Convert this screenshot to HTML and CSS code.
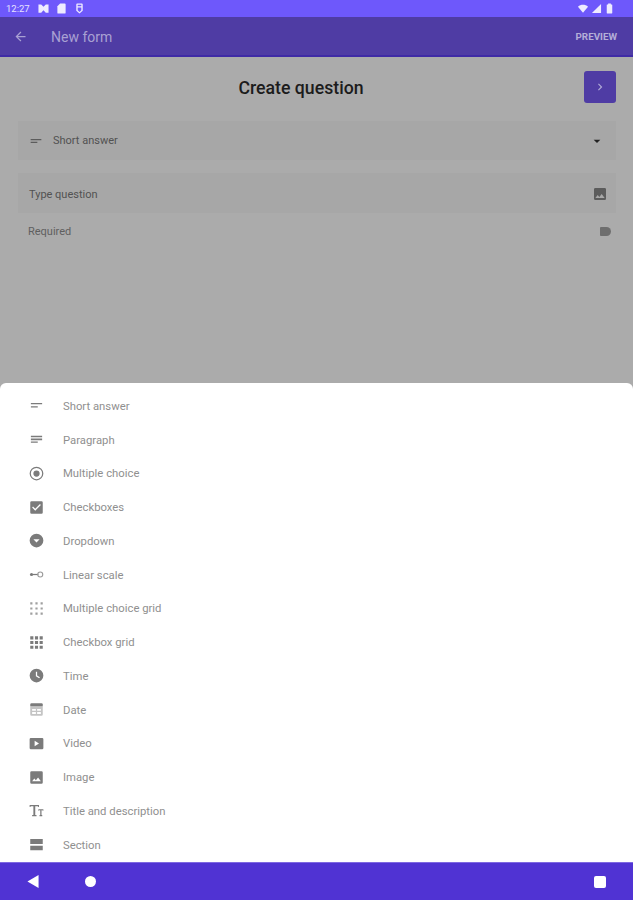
FILE: index.html
```html
<!DOCTYPE html>
<html lang="en">

<head>
    <meta charset="UTF-8">
    <meta name="viewport" content="width=device-width, initial-scale=1">
    <title>Create question</title>
    <link rel="stylesheet" href="styles.css">
</head>

<body>

    <div class="status-bar">
        <div class="status-left">
            <span class="clock">12:27</span>
            <svg class="status-icon" viewBox="0 0 24 24"><path d="M1 3h6l5 5 5-5h6v18h-6l-5-5-5 5H1z" /></svg>
            <svg class="status-icon" viewBox="0 0 24 24"><path d="M9 1h10a2 2 0 0 1 2 2v18a2 2 0 0 1-2 2H5a2 2 0 0 1-2-2V7z" /></svg>
            <svg class="status-icon" viewBox="0 0 24 24"><path fill-rule="evenodd" d="M7 1h10a2 2 0 0 1 2 2v14l-7 6-7-6V3a2 2 0 0 1 2-2zm1 3v3h8V4zm0 6v6l4 3.500 4-3.500v-6z" /></svg>
        </div>
        <div class="status-right">
            <svg class="status-icon wide" viewBox="0 0 24 24"><path d="M12 21L1 8c6-5.500 16-5.500 22 0z" /></svg>
            <svg class="status-icon" viewBox="0 0 24 24"><path d="M22 2v20H2z" /></svg>
            <svg class="status-icon" viewBox="0 0 24 24"><path d="M9 1h6v2h2a1 1 0 0 1 1 1v18a1 1 0 0 1-1 1H7a1 1 0 0 1-1-1V4a1 1 0 0 1 1-1h2z" /></svg>
        </div>
    </div>

    <div class="app-bar">
        <svg class="back-arrow" viewBox="0 0 24 24"><path d="M20 11H7.830l5.590-5.590L12 4l-8 8 8 8 1.410-1.410L7.830 13H20z" /></svg>
        <span class="app-title">New form</span>
        <span class="preview">PREVIEW</span>
    </div>

    <div class="main">
        <div class="question-head">
            <h2>Create question</h2>
            <button class="next-btn">
                <svg viewBox="0 0 24 24"><path d="M10 6L8.590 7.410 13.170 12l-4.580 4.590L10 18l6-6z" /></svg>
            </button>
        </div>

        <div class="field type-field">
            <svg class="field-icon" viewBox="0 0 24 24"><path d="M4 9h16v2H4zM4 13h10v2H4z" /></svg>
            <span class="grow">Short answer</span>
            <svg class="drop-icon" viewBox="0 0 24 24"><path d="M7 10l5 5 5-5z" /></svg>
        </div>

        <div class="field text-field">
            <span class="grow">Type question</span>
            <svg class="field-icon" viewBox="0 0 24 24"><path d="M21 19V5a2 2 0 0 0-2-2H5a2 2 0 0 0-2 2v14a2 2 0 0 0 2 2h14a2 2 0 0 0 2-2zM8.500 13.500l2.500 3 3.500-4.500 4.500 6H5z" /></svg>
        </div>

        <div class="required-row">
            <span class="grow">Required</span>
            <span class="toggle"></span>
        </div>
    </div>

    <div class="sheet">
        <div class="sheet-item">
            <svg viewBox="0 0 24 24"><path d="M3 8h18v2H3zM3 13h11v2H3z" /></svg>
            <span>Short answer</span>
        </div>
        <div class="sheet-item">
            <svg viewBox="0 0 24 24"><path d="M3 6h18v2.500H3zM3 10.500h18V13H3zM3 15h11v2H3z" /></svg>
            <span>Paragraph</span>
        </div>
        <div class="sheet-item">
            <svg viewBox="0 0 24 24"><path d="M12 7a5 5 0 1 0 0 10 5 5 0 0 0 0-10zm0-6a11 11 0 1 0 0 22 11 11 0 0 0 0-22zm0 20a9 9 0 1 1 0-18 9 9 0 0 1 0 18z" /></svg>
            <span>Multiple choice</span>
        </div>
        <div class="sheet-item">
            <svg viewBox="0 0 24 24"><path d="M20 2H4a2 2 0 0 0-2 2v16a2 2 0 0 0 2 2h16a2 2 0 0 0 2-2V4a2 2 0 0 0-2-2zm-10 15l-5-5 1.410-1.410L10 14.170l7.590-7.590L19 8z" /></svg>
            <span>Checkboxes</span>
        </div>
        <div class="sheet-item">
            <svg viewBox="0 0 24 24"><path d="M12 1a11 11 0 1 0 0 22 11 11 0 0 0 0-22zm0 14l-5-5h10z" /></svg>
            <span>Dropdown</span>
        </div>
        <div class="sheet-item">
            <svg viewBox="0 0 24 24"><circle cx="4" cy="12" r="2.500" /><path d="M4 11h11v2H4z" /><circle cx="18" cy="12" r="4" fill="none" stroke="#9a9a9a" stroke-width="1.800" /></svg>
            <span>Linear scale</span>
        </div>
        <div class="sheet-item">
            <svg class="light" viewBox="0 0 24 24"><path d="M2 2h3.500v3.500H2zM10.250 2h3.500v3.500h-3.500zM18.500 2H22v3.500h-3.500zM2 10.250h3.500v3.500H2zM10.250 10.250h3.500v3.500h-3.500zM18.500 10.250H22v3.500h-3.500zM2 18.500h3.500V22H2zM10.250 18.500h3.500V22h-3.500zM18.500 18.500H22V22h-3.500z" /></svg>
            <span>Multiple choice grid</span>
        </div>
        <div class="sheet-item">
            <svg viewBox="0 0 24 24"><path d="M2 2h5v5H2zM9.500 2h5v5h-5zM17 2h5v5h-5zM2 9.500h5v5H2zM9.500 9.500h5v5h-5zM17 9.500h5v5h-5zM2 17h5v5H2zM9.500 17h5v5h-5zM17 17h5v5h-5z" /></svg>
            <span>Checkbox grid</span>
        </div>
        <div class="sheet-item">
            <svg viewBox="0 0 24 24"><path d="M12 1a11 11 0 1 0 0 22 11 11 0 0 0 0-22zm4.200 15.200L11 13V6h2v6l4.500 2.700z" /></svg>
            <span>Time</span>
        </div>
        <div class="sheet-item">
            <svg viewBox="0 0 24 24"><path d="M20 2H4a2 2 0 0 0-2 2v3h20V4a2 2 0 0 0-2-2z" /><path class="tint" d="M2 8h20v12a2 2 0 0 1-2 2H4a2 2 0 0 1-2-2zm3 3v3h6v-3zm8 0v3h6v-3zm-8 5v3h6v-3zm8 0v3h6v-3z" fill-rule="evenodd" /></svg>
            <span>Date</span>
        </div>
        <div class="sheet-item">
            <svg viewBox="0 0 24 24"><path d="M3 3h18a2 2 0 0 1 2 2v14a2 2 0 0 1-2 2H3a2 2 0 0 1-2-2V5a2 2 0 0 1 2-2zm6 4.500v9l7-4.500z" fill-rule="evenodd" /></svg>
            <span>Video</span>
        </div>
        <div class="sheet-item">
            <svg viewBox="0 0 24 24"><path d="M22 20V4a2 2 0 0 0-2-2H4a2 2 0 0 0-2 2v16a2 2 0 0 0 2 2h16a2 2 0 0 0 2-2zM8.500 13.500l2.500 3 3.500-4.500 4.500 6H5z" /></svg>
            <span>Image</span>
        </div>
        <div class="sheet-item">
            <svg viewBox="0 0 24 24"><path d="M1 3v3.500h1l1-1.500h4v14H5v2h7v-2h-2V5h4l1 1.500h1V3zM15 10v2.500h.8l.7-1h1.500V19h-1.200v2h4.400v-2h-1.200v-7.500h1.500l.7 1h.8V10z" /></svg>
            <span>Title and description</span>
        </div>
        <div class="sheet-item">
            <svg viewBox="0 0 24 24"><path d="M2 3h20v8H2zM2 14h20v7H2z" /></svg>
            <span>Section</span>
        </div>
    </div>

    <div class="nav-bar">
        <div class="nav-left">
            <svg class="nav-back" viewBox="0 0 12 14"><path d="M12 0v14L0 7z" /></svg>
            <span class="nav-home"></span>
        </div>
        <span class="nav-recent"></span>
    </div>

</body>

</html>
```

FILE: styles.css
```css
* {
    box-sizing: border-box;
}

body {
    margin: 0;
    height: 900px;
    width: 633px;
    overflow: hidden;
    display: flex;
    flex-direction: column;
    font-family: Roboto, "Liberation Sans", sans-serif;
    background-color: #ababab;
}

.status-bar {
    height: 17px;
    background-color: #6e58fb;
    display: flex;
    align-items: center;
    justify-content: space-between;
    padding: 0 18px 0 6px;
    color: #e6e2ff;
}

.status-left,
.status-right {
    display: flex;
    align-items: center;
    gap: 2px;
}

.status-left {
    gap: 7px;
}

.clock {
    font-size: 9.5px;
    margin-right: 1px;
}

.status-icon {
    width: 11px;
    height: 11px;
    fill: #eeebff;
}

.status-icon.wide {
    width: 12px;
}

.app-bar {
    height: 40px;
    background-color: #4f3ca4;
    border-bottom: 2px solid #3f2aa6;
    display: flex;
    align-items: center;
    padding: 1px 16px 0 13px;
}

.back-arrow {
    width: 15px;
    height: 15px;
    fill: #a9a1d3;
    margin-right: 23px;
}

.app-title {
    flex: 1;
    font-size: 14px;
    color: #a9a1d3;
}

.preview {
    font-size: 9.8px;
    font-weight: 700;
    color: #b4aed8;
}

.main {
    height: 326px;
    padding: 14px 17px 0 18px;
}

.question-head {
    height: 32px;
    display: flex;
    align-items: center;
    justify-content: center;
    position: relative;
}

.question-head h2 {
    margin: 2px 32px 0 0;
    font-size: 17.7px;
    font-weight: 500;
    color: #1c1c1c;
}

.next-btn {
    position: absolute;
    right: 0;
    top: 0;
    width: 32px;
    height: 32px;
    padding: 0;
    border: none;
    border-radius: 3px;
    background-color: #4f3ca4;
    display: flex;
    align-items: center;
    justify-content: center;
}

.next-btn svg {
    width: 14px;
    height: 14px;
    fill: #b0a9d6;
}

.field {
    display: flex;
    align-items: center;
    background-color: #a7a7a7;
    font-size: 11px;
    color: #525252;
}

.grow {
    flex: 1;
}

.type-field {
    height: 39px;
    margin-top: 18px;
    padding: 0 11px 0 10px;
    gap: 9px;
}

.field-icon {
    width: 16px;
    height: 16px;
    fill: #5c5c5c;
}

.drop-icon {
    width: 16px;
    height: 16px;
    fill: #222;
}

.text-field {
    height: 40px;
    margin-top: 13px;
    padding: 2px 8px 0 11px;
}

.required-row {
    display: flex;
    align-items: center;
    margin-top: 11px;
    padding: 0 5px 0 10px;
    height: 14px;
    font-size: 11px;
    color: #5f5f5f;
}

.toggle {
    width: 11px;
    height: 9px;
    background-color: #6e6e6e;
    border-radius: 1px 5px 5px 1px;
}

.sheet {
    flex: 1;
    background-color: #fff;
    border-radius: 6px 6px 0 0;
    padding-top: 6px;
}

.sheet-item {
    height: 33.75px;
    display: flex;
    align-items: center;
    padding-left: 29px;
    gap: 19px;
    font-size: 11.3px;
    color: #8f8f8f;
}

.sheet-item span {
    padding-top: 1px;
}

.sheet-item svg {
    width: 15px;
    height: 15px;
    fill: #7b7b7b;
}

.sheet-item svg.light {
    fill: #a0a0a0;
}

.sheet-item svg .tint {
    fill: #c4c4c4;
}

.nav-bar {
    height: 38px;
    flex-shrink: 0;
    background-color: #5033d3;
    border-top: 1px solid #7e68e2;
    display: flex;
    align-items: center;
    justify-content: space-between;
    padding: 0 27px;
}

.nav-left {
    display: flex;
    align-items: center;
    gap: 46px;
}

.nav-back {
    width: 12px;
    height: 13px;
    fill: #fff;
}

.nav-home {
    width: 11px;
    height: 11px;
    border-radius: 50%;
    background-color: #fff;
}

.nav-recent {
    width: 12px;
    height: 12px;
    border-radius: 2px;
    background-color: #fff;
}
```
